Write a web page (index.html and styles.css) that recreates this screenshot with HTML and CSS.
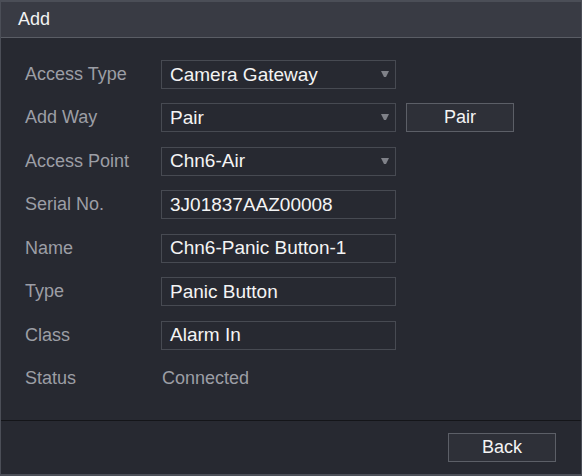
FILE: index.html
```html
<!DOCTYPE html>
<html>
<head>
<meta charset="utf-8">
<link rel="stylesheet" href="styles.css">
</head>
<body>
<div class="dialog">
  <div class="titlebar">Add</div>
  <div class="content">
    <div class="form">
      <div class="row">
        <div class="label">Access Type</div>
        <div class="field select">Camera Gateway<svg class="arrow" width="8" height="6" viewBox="0 0 8 6"><polygon points="0,0 8,0 5,6 3,6" fill="#7f8188"/></svg></div>
      </div>
      <div class="row">
        <div class="label">Add Way</div>
        <div class="field select">Pair<svg class="arrow" width="8" height="6" viewBox="0 0 8 6"><polygon points="0,0 8,0 5,6 3,6" fill="#7f8188"/></svg></div>
        <div class="btn">Pair</div>
      </div>
      <div class="row">
        <div class="label">Access Point</div>
        <div class="field select">Chn6-Air<svg class="arrow" width="8" height="6" viewBox="0 0 8 6"><polygon points="0,0 8,0 5,6 3,6" fill="#7f8188"/></svg></div>
      </div>
      <div class="row">
        <div class="label">Serial No.</div>
        <div class="field">3J01837AAZ00008</div>
      </div>
      <div class="row">
        <div class="label">Name</div>
        <div class="field">Chn6-Panic Button-1</div>
      </div>
      <div class="row">
        <div class="label">Type</div>
        <div class="field">Panic Button</div>
      </div>
      <div class="row">
        <div class="label">Class</div>
        <div class="field">Alarm In</div>
      </div>
      <div class="row">
        <div class="label">Status</div>
        <div class="value">Connected</div>
      </div>
    </div>
  </div>
  <div class="footer">
    <div class="btn">Back</div>
  </div>
</div>
</body>
</html>
```
FILE: styles.css
```css
html, body {
  margin: 0;
  padding: 0;
  background: #272931;
}
body {
  font-family: "Liberation Sans", Arial, sans-serif;
}
.dialog {
  width: 582px;
  height: 476px;
  box-sizing: border-box;
  border: 1px solid #4b4e57;
  border-top-width: 2px;
  border-bottom-width: 2px;
  display: flex;
  flex-direction: column;
  background: #272931;
}
.titlebar {
  height: 35px;
  border-bottom: 1px solid #5a5d65;
  background: #393b44;
  color: #f2f2f2;
  font-size: 18px;
  line-height: 35px;
  padding-left: 17px;
}
.content {
  height: 383px;
  box-sizing: border-box;
  border-bottom: 1px solid #141519;
  padding: 22px 0 0 24px;
}
.form {
  display: flex;
  flex-direction: column;
  gap: 14.43px;
}
.row {
  display: flex;
  align-items: center;
  height: 29px;
}
.label {
  width: 136px;
  color: #9c9ea5;
  font-size: 18px;
}
.field {
  width: 235px;
  height: 29px;
  box-sizing: border-box;
  border: 1px solid #474a52;
  color: #f4f4f4;
  font-size: 19px;
  display: flex;
  align-items: center;
  padding-left: 8px;
  position: relative;
}
.arrow {
  position: absolute;
  right: 6px;
  top: 10px;
}
.value {
  color: #9c9ea5;
  font-size: 18px;
  padding-left: 1px;
}
.btn {
  width: 108px;
  height: 29px;
  box-sizing: border-box;
  border: 1px solid #5c5f67;
  background: #2e3038;
  color: #f4f4f4;
  font-size: 18px;
  display: flex;
  align-items: center;
  justify-content: center;
}
.row .btn {
  margin-left: 10px;
}
.footer {
  flex: 1;
  display: flex;
  justify-content: flex-end;
  align-items: flex-start;
  padding: 12px 25px 0 0;
}
```
